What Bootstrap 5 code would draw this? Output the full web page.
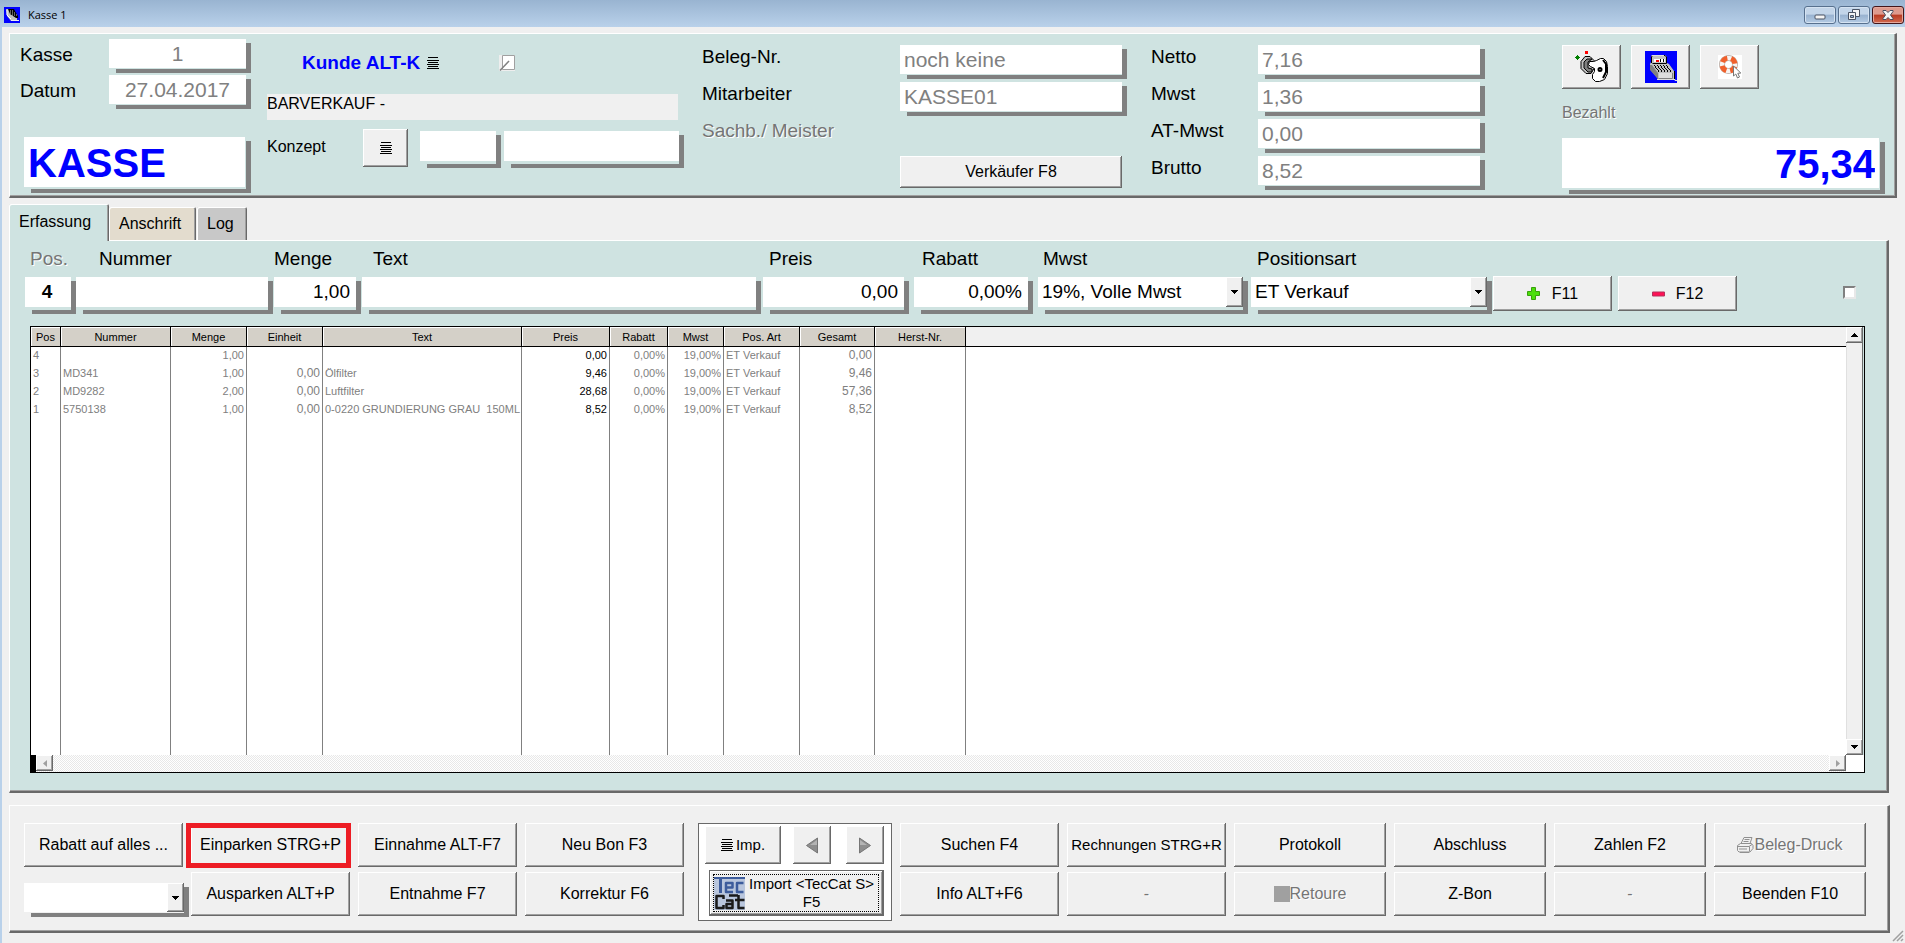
<!DOCTYPE html>
<html lang="de">
<head>
<meta charset="utf-8">
<meta name="viewport" content="width=device-width, initial-scale=1">
<title>Kasse 1</title>
<link href="https://cdn.jsdelivr.net/npm/bootstrap@5.3.0/dist/css/bootstrap.min.css" rel="stylesheet">
<style>
  body { font-family: "Liberation Sans", Arial, sans-serif; font-size: 16px; line-height: 20px; color: #000; background: #f0f0f0; }
  .titlebar { height: 27px; background: linear-gradient(#99b4d1, #b9d1ea); font-family: "Open Sans", "Noto Sans", sans-serif; font-size: 11px; padding: 6px 1px 3px 4px; }
  .winbtn { width: 32px; height: 18px; border: 1px solid #57708e; border-radius: 3px; background: linear-gradient(#c3d5e9 45%, #98b2d0 50%, #b4cbe4); box-shadow: inset 0 0 0 1px #d5e3f2; padding: 0; }
  .winbtn.closing { border-color: #43151a; background: linear-gradient(#dd9a8e 45%, #b83a22 50%, #d26a50); box-shadow: inset 0 0 0 1px #e6a89c; }
  .desk { border-left: 2px solid #b9d1ea; padding: 6px 8px 10px 7px; }
  .sheet { border: 1px solid #fff; border-right: 2px solid #696969; border-bottom: 2px solid #696969; box-shadow: inset -1px -1px 0 #a0a0a0; }
  .teal { background: #cfe3e1; }

  .cap { font-size: 19px; line-height: 24px; white-space: nowrap; }
  .dim { color: #757575; text-shadow: 1px 1px 0 #fff; }
  /* white box with a detached grey drop edge */
  .edge { padding: 0 5px 5px 0; background: linear-gradient(#808080, #808080) right bottom / 5px calc(100% - 4px) no-repeat, linear-gradient(#808080, #808080) right bottom / calc(100% - 7px) 4px no-repeat; display: flex; }
  .edge > input, .edge > select { flex: 1 1 0; min-width: 0; width: 100%; border: 0; border-radius: 0; background: #fff; height: 29px; padding: 0 4px; outline: 0; appearance: none; color: #000; font-size: 21px; }
  .edge > .soft { color: #808080; }
  .edge.deep { padding-bottom: 7px; }
  .edge.deep > input, .edge.deep > select { height: 30px; font-size: 19px; padding: 0 6px 1px 4px; }
  .edge.big { padding: 0 6px 6px 0; }
  .edge.big > input { height: 50px; font-size: 40px; font-weight: bold; color: #00f; padding-top: 3px; }
  .key3d { border: 0; border-radius: 0; background: #f0f0f0; color: #000; padding: 0; font-size: 16px; line-height: 18px; white-space: nowrap; min-width: 0;
    box-shadow: inset -1px -1px 0 #696969, inset 1px 1px 0 #fff, inset -2px -2px 0 #a0a0a0; display: flex; align-items: center; justify-content: center; }
  .key3d.dim { color: #757575; }
  .drop { width: 17px; flex: none; }

  .head-grid { display: grid; grid-template-columns: 256fr 435fr 198fr 251fr 107fr 304fr 333fr; padding-left: 1px; }
  .stack { display: grid; grid-auto-rows: 34px; row-gap: 3px; padding-top: 11px; align-content: start; }
  .slot { width: 227px; }

  .tabs3 .nav-link { color: #000; border: 0; border-radius: 2px 2px 0 0; padding: 0 10px; line-height: 33px; height: 33px; box-shadow: inset 1px 1px 0 #fff, inset -1px 0 0 #696969, inset -2px 0 0 #a0a0a0; }
  .tabs3 .nav-link.active { color: #000; background: #cfe3e1; height: 37px; line-height: 35px; margin-bottom: -1px; width: 100px; position: relative; }
  .sand { background: #e3dcce; width: 87px; }
  .ash { background: #c8c8c8; width: 50px; margin-left: 1px; }

  .entry { display: grid; grid-template-columns: 51fr 198fr 88fr 401fr 151fr 124fr 213fr 242fr 119fr 6fr 119fr 106fr 44fr; align-items: end; padding: 6px 0 0 15px; }
  .entry .cap { margin-bottom: 6px; display: block; }
  .entry .w1 { margin-right: 1px; } .entry .w2 { margin-right: 2px; } .entry .w5 { margin-right: 5px; } .entry .w3 { margin-right: 3px; }
  .tick3d { appearance: none; width: 13px; height: 13px; border: 2px solid; border-color: #808080 #e8e8e8 #e8e8e8 #808080; background: #fff; margin: 0; display: block; }

  .listing { display: grid; grid-template-columns: minmax(0, 1fr) 18px; grid-template-rows: 1fr 17px; border: 1px solid #000; background: #fff; margin: 12px 22px 18px 20px; }
  .listing table { table-layout: fixed; width: 100%; height: 100%; border-collapse: separate; border-spacing: 0; font-size: 11px; line-height: 17px; color: #808080; }
  .listing th { height: 20px; font-weight: normal; color: #000; text-align: center; padding: 0; line-height: 18px; background: #d4d0c8; border-right: 1px solid #000; border-bottom: 1px solid #000; box-shadow: inset 1px 1px 0 #fff; }
  .listing th:last-child { background: #f0f0f0; border-right: 0; box-shadow: none; }
  .listing td { height: 18px; padding: 0 2px; border-right: 1px solid #808080; white-space: pre; vertical-align: top; }
  .listing td:last-child { border-right: 0; }
  .listing tr.rest td { height: auto; }
  .num { text-align: right; }
  .listing .wide { font-size: 12px; }
  .vtrack { background: #f0f0f0; box-shadow: inset 1px 0 0 #e0e0e0, inset -1px 0 0 #cfe3e1, inset -2px 0 0 #696969; }
  .htrack { background: #fff repeating-conic-gradient(#e8e8e8 0 25%, #fff 0 50%) 0 0 / 2px 2px; border-left: 5px solid #000; }
  .arrow3d { width: 17px; height: 16px; }

  .deck { display: grid; grid-template-columns: 159fr 159fr 159fr 159fr 200fr 159fr 159fr 152fr 152fr 152fr 152fr; grid-template-rows: 44px 44px; gap: 5px 8px; padding: 17px 22px 15px 14px; }
  .framed { position: relative; display: grid; }
  .marker { position: absolute; top: 0; right: -1px; bottom: -1px; left: -5px; border: 5px solid #ed1c24; pointer-events: none; }
  .import { grid-column: 5; grid-row: 1 / 3; margin: 0 0 -5px 6px; border: 1px solid #696969; background: #fff; padding: 2px 7px 4px 6px; }
  .focus3d { border: 1px solid #696969; }
  .dotted3d { border: 1px dotted #000; margin: 3px 4px 3px 3px; }
  .grip { position: absolute; right: 1px; bottom: 1px; }
</style>
</head>
<body class="d-flex flex-column min-vh-100 position-relative">

<svg width="0" height="0" class="position-absolute" aria-hidden="true">
  <symbol id="lines" viewBox="0 0 12 12"><path d="M1 .5h10M0 3.5h12M1 5.5h10M0 7.5h12M1 9.5h10M0 11.5h12" stroke="#000"/></symbol>
  <symbol id="down" viewBox="0 0 7 4"><path d="M0 0h7v1H6v1H5v1H4v1H3V3H2V2H1V1H0z"/></symbol>
  <symbol id="register" viewBox="0 0 32 32">
    <path fill="#00f" d="M0 0h32v32H0z"/>
    <path fill="#c0c0c0" d="M7 4h13l2 2v6l2 1 5 7v8H13L5 18v-5l1-2V5z"/>
    <path fill="#808080" d="M5 14h2l6 8v6L5 19z"/>
    <path d="M6.500 12V6l1-1.500H20l1.500 1.500v6.500h-14" stroke="#000" fill="none"/>
    <path fill="#fff" d="M9 8h11v3H9z"/><path fill="#f00" d="M11 9h3v2h-3z"/><path d="M15 8h1v3h-1zM18 8h1v3h-1z"/>
    <path d="M9 14.500h14M10 16.500h15M12 18.500h15M13 20.500h15" stroke="#000" stroke-dasharray="1 2"/>
    <path d="M10 15.500h14M11 17.500h15M13 19.500h15" stroke="#000" stroke-dasharray="1 2"/>
    <path d="M29.500 20v8.500" stroke="#000"/>
    <path fill="#dcdcdc" d="M14 22h13v5H14z"/><path stroke="#808080" fill="none" d="M13.500 27.500h14v-5.500"/>
    <path d="M7 4.500h12M12 28.500h18v1h2" stroke="#ddd" fill="none"/>
  </symbol>
</svg>

<header class="titlebar d-flex align-items-center">
  <svg width="16" height="16" viewBox="0 0 16 16" aria-hidden="true"><path fill="#00f" d="M0 0h16v16H0z"/><path fill="#c0c0c0" d="M2 2h3l2 4 6 4v4H7L3 9z"/><path fill="#000" d="M4 2h6l1 2 3 5v2h-2L6 7z"/><path d="M6 4h4M6 6h5M8 8h5" stroke="#c0c0c0" stroke-dasharray="1 1"/><path d="M3 3v5l4 4" stroke="#fff" fill="none"/><path d="M7 13.500h8" stroke="#eee"/></svg>
  <span class="ms-2">Kasse 1</span>
  <div class="ms-auto d-flex" style="gap:2px">
    <button class="winbtn d-flex align-items-center justify-content-center" aria-label="Minimieren"><svg width="12" height="12"><rect x="1" y="6" width="10" height="4" rx="1" fill="#f4f4f4" stroke="#4a5363"/></svg></button>
    <button class="winbtn d-flex align-items-center justify-content-center" aria-label="Wiederherstellen"><svg width="12" height="12" fill="#f4f4f4" stroke="#4a5363"><path d="M4.500 .5h7v7h-7z"/><path d="M.5 3.500h7v7h-7z"/><path fill="#98b2d0" d="M2.500 6.500h3v2h-3z"/></svg></button>
    <button class="winbtn closing d-flex align-items-center justify-content-center" aria-label="Schließen"><svg width="12" height="10" fill="#f4f4f4" stroke="#4a4f60"><path d="M1 .5h3l2 2 2-2h3v1L8.500 5 11 8.500v1H8l-2-2-2 2H1v-1L3.500 5 1 1.500z"/></svg></button>
  </div>
</header>

<main class="desk d-flex flex-column flex-grow-1">

  <section class="sheet teal head-grid" style="min-height:165px">
    <div class="d-flex flex-column" style="padding:5px 16px 0 9px">
      <div class="d-flex justify-content-between" style="margin-bottom:2px"><label class="cap pt-1" for="kasse">Kasse</label><div class="edge" style="width:142px"><input id="kasse" class="soft text-center" value="1"></div></div>
      <div class="d-flex justify-content-between"><label class="cap pt-1" for="datum">Datum</label><div class="edge" style="width:142px"><input id="datum" class="soft text-center" value="27.04.2017"></div></div>
      <div class="edge big" style="margin:28px 0 0 4px"><input aria-label="Belegart" value="KASSE"></div>
    </div>

    <div class="d-flex flex-column" style="padding:17px 18px 0 0">
      <div class="d-flex align-items-center" style="height:24px;padding-left:35px;margin-bottom:19px">
        <a href="#" class="cap fw-bold text-decoration-none" style="color:#00f">Kunde ALT-K</a>
        <svg width="12" height="12" style="margin-left:7px"><use href="#lines"/></svg>
        <svg width="16" height="16" style="margin-left:60px" aria-hidden="true"><path fill="#eee" d="M0 0h16v16H0z"/><path fill="#fff" stroke="#a0a0a0" d="M3.500 .5h12v14h-12z"/><path d="M1 15.500L10 6" stroke="#808080" stroke-width="1.500"/></svg>
      </div>
      <div style="background:#f0f0f0;height:26px;line-height:19px;margin-right:6px">BARVERKAUF -</div>
      <div class="d-flex align-items-start" style="padding-top:9px">
        <label for="konzept" class="flex-shrink-0" style="width:96px;padding-top:8px">Konzept</label>
        <button class="key3d flex-shrink-0" aria-label="Konzept wählen" style="width:45px;height:38px"><svg width="12" height="12"><use href="#lines"/></svg></button>
        <div class="edge deep flex-shrink-0" style="width:81px;margin:2px 3px 0 12px"><input id="konzept"></div>
        <div class="edge deep" style="margin-top:2px;flex:1 1 0;min-width:0"><input aria-label="Konzeptname"></div>
      </div>
    </div>

    <div class="stack">
      <label class="cap" for="beleg">Beleg-Nr.</label><label class="cap" for="mitarb">Mitarbeiter</label><span class="cap dim">Sachb./ Meister</span>
    </div>
    <div class="stack">
      <div class="edge slot"><input id="beleg" class="soft" value="noch keine"></div>
      <div class="edge slot"><input id="mitarb" class="soft" value="KASSE01"></div>
      <span></span>
      <button class="key3d" style="width:222px;height:32px">Verkäufer F8</button>
    </div>
    <div class="stack">
      <label class="cap" for="netto">Netto</label><label class="cap" for="mw">Mwst</label><label class="cap" for="atmw">AT-Mwst</label><label class="cap" for="brutto">Brutto</label>
    </div>
    <div class="stack">
      <div class="edge slot"><input id="netto" class="soft" value="7,16"></div>
      <div class="edge slot"><input id="mw" class="soft" value="1,36"></div>
      <div class="edge slot"><input id="atmw" class="soft" value="0,00"></div>
      <div class="edge slot"><input id="brutto" class="soft" value="8,52"></div>
    </div>

    <div class="d-flex flex-column" style="padding:11px 10px 0 0">
      <div class="d-flex" style="gap:10px">
        <button class="key3d" aria-label="Kasse öffnen" style="width:59px;height:44px">
          <svg width="34" height="34" viewBox="0 0 34 34"><path fill="red" d="M10 1h3v3h-3z"/><path fill="green" d="M2 5h1v1h1v1h1v1H4v1H3v1H2V9H1V8H0V7h1V6h1z"/>
            <path fill="#c0c0c0" stroke="#000" d="M10 6.500h5l4 4v8l-3 5h-5l-5-5v-7z"/><path fill="#808080" stroke="#000" d="M12 9h5l-4 3v6l4 1v3h-4l-4-4v-6z"/>
            <path fill="#fff" stroke="#000" d="M14.500 11.500h4l3-1 4-2h3l3 3 1 5v7l-3 6-5 2h-4l-3-3v-4l2-3v-3l-4-2-2-2z"/><path d="M28 10l3 4v8l-3 6" stroke="#000" fill="none" stroke-width="2"/><circle cx="25" cy="19.500" r="1.500" fill="#fff" stroke="#000" stroke-width="2"/></svg>
        </button>
        <button class="key3d" aria-label="Registrierkasse" style="width:59px;height:44px"><svg width="32" height="32"><use href="#register"/></svg></button>
        <button class="key3d" aria-label="Hilfe" style="width:59px;height:44px">
          <svg width="24" height="24"><path fill="#fff" d="M0 0h24v24H0z"/><circle cx="10.500" cy="9.500" r="6.500" fill="none" stroke="#b5a9a2" stroke-width="6"/><circle cx="10.500" cy="9.500" r="6.500" fill="none" stroke="#f7f4f2" stroke-width="4.500"/><circle cx="10.500" cy="9.500" r="6.500" fill="none" stroke="#f0602c" stroke-width="5" stroke-dasharray="6.200 4.010" stroke-dashoffset="-2"/><path d="M15.500 11v10l2.300-2 1.700 4 2-1-1.700-3.700 3-.3z" fill="#fff" stroke="#777"/></svg>
        </button>
      </div>
      <label for="bezahlt" class="dim" style="padding:14px 0 15px">Bezahlt</label>
      <div class="edge big"><input id="bezahlt" class="text-end" value="75,34"></div>
    </div>
  </section>

  <nav class="tabs3 nav align-items-end" style="padding-top:6px;height:42px">
    <a href="#" class="nav-link active">Erfassung</a>
    <a href="#" class="nav-link sand">Anschrift</a>
    <a href="#" class="nav-link ash">Log</a>
  </nav>

  <section class="sheet teal d-flex flex-column flex-grow-1" style="margin-right:8px">
    <div class="entry">
      <div><span class="cap dim" style="padding-left:5px">Pos.</span><div class="edge deep"><input class="text-center fw-bold" aria-label="Pos." value="4"></div></div>
      <div class="w1"><label class="cap" for="nummer" style="padding-left:23px">Nummer</label><div class="edge deep"><input id="nummer"></div></div>
      <div class="w1"><label class="cap" for="menge">Menge</label><div class="edge deep"><input id="menge" class="text-end" value="1,00"></div></div>
      <div class="w2"><label class="cap" for="text" style="padding-left:11px">Text</label><div class="edge deep"><input id="text"></div></div>
      <div class="w5"><label class="cap" for="preis" style="padding-left:6px">Preis</label><div class="edge deep"><input id="preis" class="text-end" value="0,00"></div></div>
      <div class="w5"><label class="cap" for="rabatt" style="padding-left:8px">Rabatt</label><div class="edge deep"><input id="rabatt" class="text-end" value="0,00%"></div></div>
      <div class="w3"><label class="cap" for="mwst" style="padding-left:5px">Mwst</label><div class="edge deep"><select id="mwst"><option>19%, Volle Mwst</option></select><span class="key3d drop"><svg width="7" height="4"><use href="#down"/></svg></span></div></div>
      <div class="w1"><label class="cap" for="posart" style="padding-left:6px">Positionsart</label><div class="edge deep"><select id="posart"><option>ET Verkauf</option></select><span class="key3d drop"><svg width="7" height="4"><use href="#down"/></svg></span></div></div>
      <button class="key3d" style="height:35px;margin-bottom:3px;gap:12px"><svg width="13" height="13"><path d="M4.500 .5h4v4h4v4h-4v4h-4v-4h-4v-4h4z" fill="#4cdf0c" stroke="#38a00c"/></svg>F11</button>
      <span></span>
      <button class="key3d" style="height:35px;margin-bottom:3px;gap:11px"><svg width="13" height="13"><path d="M.5 5h12v4H.5z" fill="#ff1155" stroke="#b5305c"/></svg>F12</button>
      <span></span>
      <input type="checkbox" class="tick3d" aria-label="Position markieren" style="margin-bottom:15px">
    </div>

    <div class="listing flex-grow-1">
      <table>
        <colgroup><col style="width:30px"><col style="width:110px"><col style="width:76px"><col style="width:76px"><col style="width:199px"><col style="width:88px"><col style="width:58px"><col style="width:56px"><col style="width:76px"><col style="width:75px"><col style="width:91px"><col></colgroup>
        <thead><tr><th>Pos</th><th>Nummer</th><th>Menge</th><th>Einheit</th><th>Text</th><th>Preis</th><th>Rabatt</th><th>Mwst</th><th>Pos. Art</th><th>Gesamt</th><th>Herst-Nr.</th><th></th></tr></thead>
        <tbody>
          <tr><td>4</td><td></td><td class="num">1,00</td><td></td><td></td><td class="num text-black">0,00</td><td class="num">0,00%</td><td class="num">19,00%</td><td>ET Verkauf</td><td class="num wide">0,00</td><td></td><td></td></tr>
          <tr><td>3</td><td>MD341</td><td class="num">1,00</td><td class="num wide">0,00</td><td>Ölfilter</td><td class="num text-black">9,46</td><td class="num">0,00%</td><td class="num">19,00%</td><td>ET Verkauf</td><td class="num wide">9,46</td><td></td><td></td></tr>
          <tr><td>2</td><td>MD9282</td><td class="num">2,00</td><td class="num wide">0,00</td><td>Luftfilter</td><td class="num text-black">28,68</td><td class="num">0,00%</td><td class="num">19,00%</td><td>ET Verkauf</td><td class="num wide">57,36</td><td></td><td></td></tr>
          <tr><td>1</td><td>5750138</td><td class="num">1,00</td><td class="num wide">0,00</td><td>0-0220 GRUNDIERUNG GRAU  150ML</td><td class="num text-black">8,52</td><td class="num">0,00%</td><td class="num">19,00%</td><td>ET Verkauf</td><td class="num wide">8,52</td><td></td><td></td></tr>
          <tr class="rest"><td></td><td></td><td></td><td></td><td></td><td></td><td></td><td></td><td></td><td></td><td></td><td></td></tr>
        </tbody>
      </table>
      <div class="vtrack d-flex flex-column justify-content-between">
        <button class="key3d arrow3d" aria-label="Nach oben"><svg width="7" height="4"><path d="M0 4h7V3H6V2H5V1H4V0H3v1H2v1H1v1H0z"/></svg></button>
        <button class="key3d arrow3d" aria-label="Nach unten"><svg width="7" height="4"><use href="#down"/></svg></button>
      </div>
      <div class="htrack d-flex justify-content-between">
        <button class="key3d arrow3d" aria-label="Nach links"><svg width="4" height="7"><path fill="#a0a0a0" d="M4 0v7L0 3.500z"/></svg></button>
        <button class="key3d arrow3d" aria-label="Nach rechts"><svg width="4" height="7"><path fill="#a0a0a0" d="M0 0v7l4-3.500z"/></svg></button>
      </div>
      <div></div>
    </div>
  </section>

  <section class="sheet deck" style="margin:12px 7px 0 0">
    <button class="key3d">Rabatt auf alles ...</button>
    <div class="framed"><button class="key3d">Einparken STRG+P</button><span class="marker"></span></div>
    <button class="key3d">Einnahme ALT-F7</button>
    <button class="key3d">Neu Bon F3</button>
    <div class="import d-flex flex-column justify-content-between">
      <div class="d-flex">
        <button class="key3d" style="width:76px;height:38px;font-size:15px;gap:3px"><svg width="12" height="12"><use href="#lines"/></svg>Imp.</button>
        <button class="key3d ms-auto" aria-label="Zurück" style="width:38px"><svg width="12" height="17"><path fill="#8e8e8e" stroke="#767676" d="M11.500 1v15L.5 8.500z"/><path fill="#b4b4b4" d="M11 3v5H4z"/></svg></button>
        <button class="key3d" aria-label="Vor" style="width:38px;margin-left:15px"><svg width="12" height="17"><path fill="#8e8e8e" stroke="#767676" d="M.5 1v15l11-7.500z"/><path fill="#b4b4b4" d="M1 3v5h7z"/></svg></button>
      </div>
      <button class="key3d focus3d align-items-stretch" style="height:46px;margin-left:4px">
        <span class="dotted3d d-flex align-items-center flex-grow-1">
          <svg width="31" height="33" viewBox="0 0 31 33" aria-hidden="true"><path fill="#b9c6dd" d="M0 0h31v33H0z"/><path fill="#3d5c9c" d="M0 0h31v2H0zM5 2h3v14H5z"/><g fill="none" stroke="#3d5c9c" stroke-width="2.500" stroke-linejoin="round"><path d="M12 10.500h6.500v-4.500H12v9h7M29.500 6h-6.500v9h6.500"/></g><g fill="none" stroke="#1a1a1a" stroke-width="2.500" stroke-linejoin="round"><path d="M9.500 22v-3H2.500v12h7v-3M12 23.500h6.500v7.500h-6v-4h6M24.500 18v13h6M21 23h9.500M15 18.500h9"/></g></svg>
          <span class="flex-grow-1 text-center" style="font-size:15px">Import &lt;TecCat S&gt;<br>F5</span>
        </span>
      </button>
    </div>
    <button class="key3d">Suchen F4</button>
    <button class="key3d" style="font-size:15px">Rechnungen STRG+R</button>
    <button class="key3d">Protokoll</button>
    <button class="key3d">Abschluss</button>
    <button class="key3d">Zahlen F2</button>
    <button class="key3d dim"><svg width="17" height="17" viewBox="0 0 17 17" fill="none" stroke="#909090"><path d="M4 6.500L7 .5h8L13 6.500M7.500 2.500h5M6.500 4.500h5M.5 8.500l3-2h11l1.500 2v3l-3 3.500H2l-1.500-1.500zM1 9.500h11l3-2M12.500 9.500v5M2 12h8M3 15.500h9"/></svg>Beleg-Druck</button>

    <div class="edge" style="margin:11px -6px 0 0;height:34px"><select aria-label="Rabattauswahl"><option></option></select><span class="key3d drop"><svg width="7" height="4"><use href="#down"/></svg></span></div>
    <button class="key3d">Ausparken ALT+P</button>
    <button class="key3d">Entnahme F7</button>
    <button class="key3d">Korrektur F6</button>
    <button class="key3d">Info ALT+F6</button>
    <button class="key3d dim">-</button>
    <button class="key3d dim"><svg width="16" height="16"><path fill="#a0a0a0" d="M0 0h16v16H0z"/></svg>Retoure</button>
    <button class="key3d">Z-Bon</button>
    <button class="key3d dim">-</button>
    <button class="key3d">Beenden F10</button>
  </section>
</main>
<svg class="grip" width="12" height="12" aria-hidden="true"><path d="M1 11L11 1M5 11l6-6M9 11l2-2" stroke="#a0a0a0" stroke-width="1.500"/></svg>
<script src="https://cdn.jsdelivr.net/npm/bootstrap@5.3.0/dist/js/bootstrap.bundle.min.js"></script>
</body>
</html>
